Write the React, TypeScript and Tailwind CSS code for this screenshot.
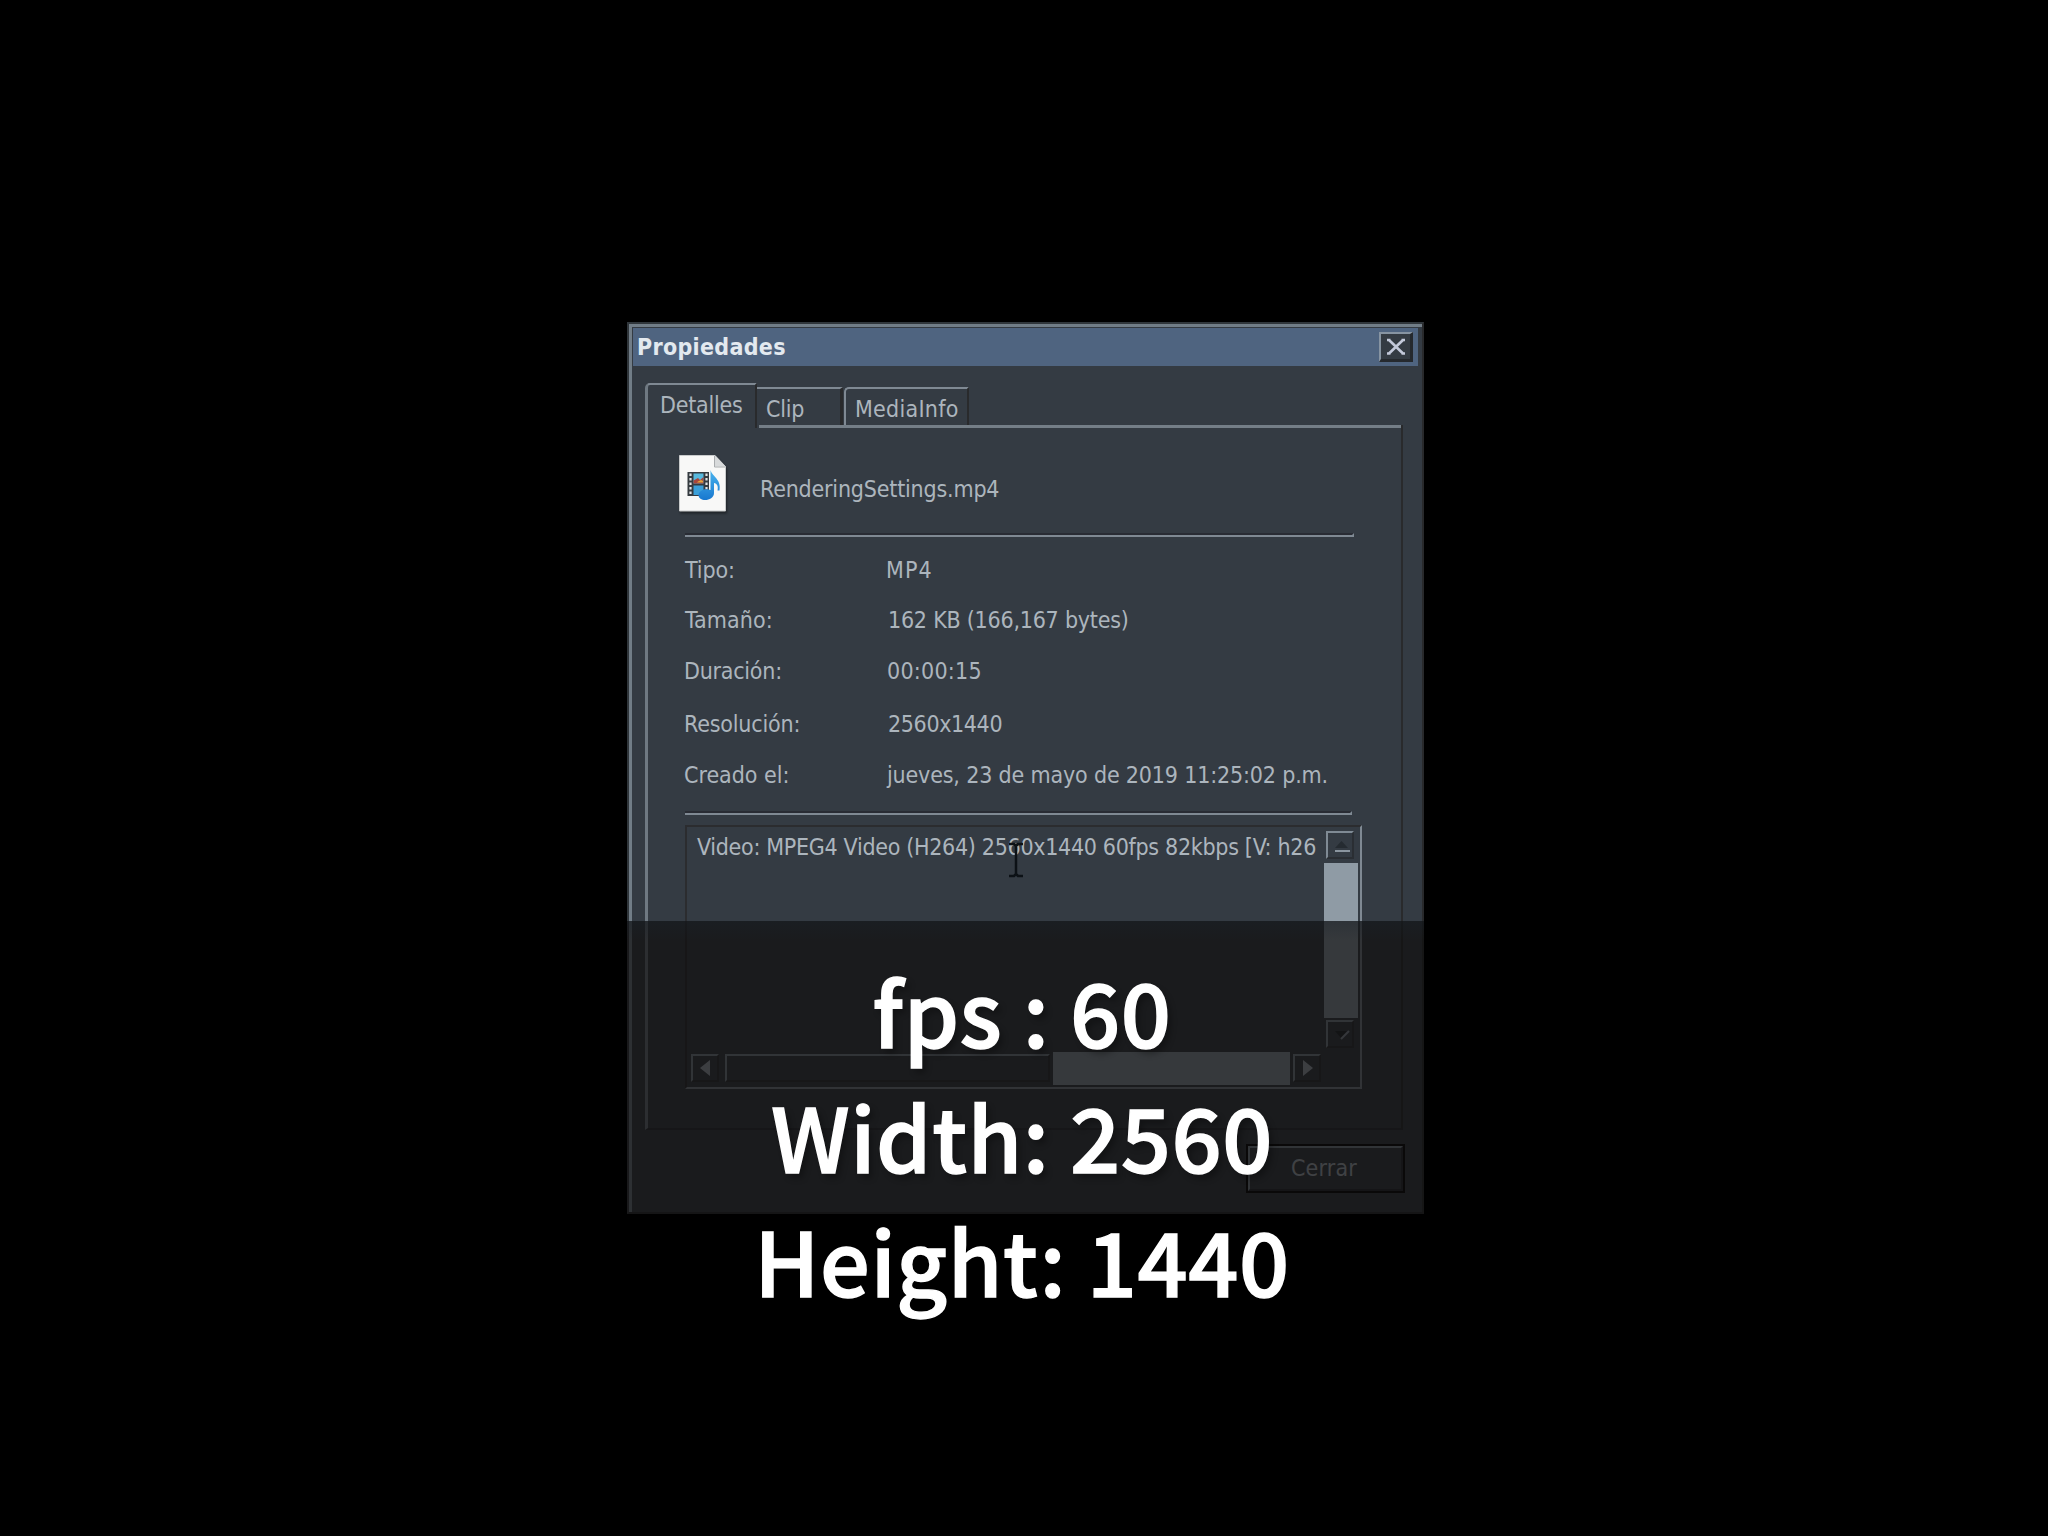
import type { ReactNode } from "react";

const rows = [
  { label: "Tipo:", value: "MP4", h: "h-[50px]", l: "pl-0 tracking-[-0.1px]", v: "pl-0 tracking-[1.1px]" },
  { label: "Tamaño:", value: "162 KB (166,167 bytes)", h: "h-[51px]", l: "pl-0 tracking-[0.1px]", v: "pl-0.5 tracking-[-0.23px]" },
  { label: "Duración:", value: "00:00:15", h: "h-[53px]", l: "-ml-px tracking-[-0.25px]", v: "pl-px tracking-[0.25px]" },
  { label: "Resolución:", value: "2560x1440", h: "h-[51px]", l: "-ml-px tracking-[-0.18px]", v: "pl-0.5 tracking-[-0.37px]" },
  { label: "Creado el:", value: "jueves, 23 de mayo de 2019 11:25:02 p.m.", h: "h-[49px]", l: "-ml-px tracking-[-0.03px]", v: "pl-px tracking-[-0.17px]" },
];

const captions = ["fps : 60", "Width: 2560", "Height: 1440"];

function Rule({ className }: { className: string }) {
  return <div className={`ml-[37px] h-1 shrink-0 border-t-2 border-r-2 border-b-2 border-t-[#292c34] border-r-[#7f8993] border-b-[#7f8993] ${className}`} />;
}

function ArrowButton({ className = "", children }: { className?: string; children: ReactNode }) {
  return (
    <div className={`flex h-7 w-7 shrink-0 items-center justify-center border-2 border-t-[#7f8a94] border-r-[#2a2e33] border-b-[#2a2e33] border-l-[#7f8a94] ${className}`}>
      {children}
    </div>
  );
}

function FileIcon() {
  return (
    <svg width="48" height="58" viewBox="0 0 48 58" className="shrink-0 drop-shadow-[1px_2px_1px_rgba(0,0,0,0.4)]">
      <defs>
        <linearGradient id="note" x1="0" y1="0" x2="0" y2="1">
          <stop offset="0" stopColor="#49b4ee" />
          <stop offset="1" stopColor="#1878cf" />
        </linearGradient>
      </defs>
      <path d="M0.5 0.5H36L46.5 11.5V56H0.5Z" fill="#f8f8f7" stroke="#c9cbcc" />
      <path d="M36 0.5V11.5H46.5Z" fill="#d8dadb" />
      <path d="M35.5 1V12H46" fill="none" stroke="#a9acae" strokeWidth="1" />
      <rect x="8.5" y="17" width="21.500" height="24" fill="#353b40" />
      <rect x="14.500" y="18.500" width="10" height="10" fill="#58b9dd" />
      <path d="M14.500 25.500L19 23L21 25L24.500 22V28.500H14.500Z" fill="#a8463c" />
      <path d="M19 26.500L22 25L24 26V27.500H18Z" fill="#e0a63b" />
      <rect x="14.500" y="30.500" width="10" height="9.500" fill="#3b9fd8" />
      <path d="M11.500 18.500V40M27.500 18.500V40" stroke="#dfe3e5" strokeWidth="2.200" strokeDasharray="2.500 2" />
      <path d="M31.500 15C33.500 22 42.500 24 40.500 35.500H38.500C39.500 31 38 28.500 35 28V38C35 46.500 19.500 47.500 19.500 40C20 34.500 27.500 33 31.500 35Z" fill="url(#note)" />
    </svg>
  );
}

export default function App() {
  return (
    <main className="h-[1536px] w-[2048px] overflow-hidden bg-black pt-[322px] pl-[627px] font-['DejaVu_Sans_Condensed','DejaVu_Sans',sans-serif] text-[23px] leading-[26px] whitespace-nowrap text-[#acb5bd]">
      <div className="relative h-[892px] w-[797px]">
        <section className="flex h-full w-full flex-col border-2 border-t-[#30363b] border-r-[#292a2c] border-b-[#24272a] border-l-[#30363b] bg-[#343b43]">
          <div className="flex h-full w-full flex-col border-t-3 border-l-3 border-t-[#717d87] border-l-[#717d87] pt-px pl-px">
            <header className="mr-1 flex h-[38px] shrink-0 items-start justify-between bg-[#4f6480] pt-1 pr-[5px] pl-1">
              <h1 className="mt-0.5 text-[23px] font-bold tracking-[0.3px] text-[#e3e9ef]">Propiedades</h1>
              <button className="flex h-[30px] w-[34px] items-center justify-center border-t-2 border-r-3 border-b-3 border-l-2 border-t-[#8794a2] border-r-[#25292e] border-b-[#25292e] border-l-[#8794a2] bg-[#343b43]">
                <svg width="20" height="18" viewBox="0 0 20 18" fill="none" stroke="#c3c9da" strokeWidth="2.600">
                  <path d="M3 2L17 15.500M17 2L3 15.500M1 2H4.500M15.500 2H19M1 15.500H4.500M15.500 15.500H19" />
                </svg>
              </button>
            </header>

            <nav className="mt-[17px] ml-3 flex h-[42px] shrink-0 items-start">
              <div className="h-[42px] w-[112px] rounded-tl-[5px] border-t-2 border-r-2 border-l-3 border-t-[#7f8993] border-r-[#292a2c] border-l-[#6f7982] pt-[7px] pl-3 tracking-[-0.25px]">Detalles</div>
              <div className="mt-1 h-[38px] w-[86px] border-t-2 border-r-3 border-t-[#7f8993] border-r-[#292a2c] pt-[7px] pl-[9px] tracking-[-0.2px]">Clip</div>
              <div className="mt-1 ml-px h-[38px] w-[125px] rounded-tl-[5px] border-t-2 border-r-2 border-l-2 border-t-[#7f8993] border-r-[#292a2c] border-l-[#7f8993] pt-[7px] pl-[9px] tracking-[0.25px]">MediaInfo</div>
            </nav>

            <div className="ml-3 flex h-[705px] w-[758px] shrink-0 flex-col border-r-2 border-b-2 border-l-3 border-r-[#292a2c] border-b-[#292c30] border-l-[#6f7982]">
              <div className="ml-[107px] h-[3px] shrink-0 border-l-2 border-l-[#292a2c]">
                <div className="ml-0.5 h-[3px] bg-[#747e87]" />
              </div>
              <div className="flex h-[105px] shrink-0 items-start pt-[27px] pl-[31px]">
                <FileIcon />
                <span className="mt-[21px] ml-[33px] tracking-[-0.2px]">RenderingSettings.mp4</span>
              </div>
              <Rule className="w-[669px]" />
              <dl className="mt-5 ml-[37px] flex h-[254px] shrink-0 flex-col">
                {rows.map((r) => (
                  <div key={r.label} className={`flex shrink-0 ${r.h}`}>
                    <dt className="w-[201px]">
                      <div className={r.l}>{r.label}</div>
                    </dt>
                    <dd className={r.v}>{r.value}</dd>
                  </div>
                ))}
              </dl>
              <Rule className="w-[667px]" />

              <div className="mt-2.5 ml-[37px] flex h-[264px] w-[677px] shrink-0 flex-col border-2 border-t-[#2b2c2f] border-r-[#7f8993] border-b-[#7f8993] border-l-[#2b2c2f]">
                <div className="flex h-[225px] shrink-0">
                  <div className="w-[637px] pt-[7px] pl-2.5 tracking-[-0.31px]">Video: MPEG4 Video (H264) 2560x1440 60fps 82kbps [V: h26</div>
                  <div className="flex w-[34px] flex-col pt-1">
                    <ArrowButton className="ml-0.5">
                      <svg width="18" height="18" viewBox="0 0 18 18" className="mt-1 ml-1 shrink-0">
                        <path d="M2 10L8.500 3L15 10Z" fill="#252b31" />
                        <path d="M2 13H17" stroke="#8a959f" strokeWidth="2" />
                      </svg>
                    </ArrowButton>
                    <div className="mt-1 h-[155px] w-[34px] shrink-0 bg-[#8f9ba5]" />
                    <ArrowButton className="mt-0.5 ml-0.5">
                      <svg width="18" height="18" viewBox="0 0 18 18" className="mt-1 ml-1 shrink-0">
                        <path d="M2 4H14L8 11Z" fill="#1f2428" />
                        <path d="M8 12L16 4" stroke="#8a959f" strokeWidth="2" />
                      </svg>
                    </ArrowButton>
                  </div>
                </div>
                <div className="flex h-[33px] items-start">
                  <ArrowButton className="mt-0.5 ml-1">
                    <svg width="10" height="16" viewBox="0 0 10 16" className="mr-px">
                      <path d="M10 0V16L0 8Z" fill="#a3acb6" />
                    </svg>
                  </ArrowButton>
                  <div className="mt-0.5 ml-1.5 h-7 w-[325px] shrink-0 border-2 border-t-[#7f8a94] border-r-[#2a2e33] border-b-[#2a2e33] border-l-[#7f8a94]" />
                  <div className="ml-[3px] h-[33px] w-[237px] shrink-0 bg-[#8f9ba5]" />
                  <ArrowButton className="mt-0.5 ml-[3px]">
                    <svg width="10" height="16" viewBox="0 0 10 16" className="ml-px">
                      <path d="M0 0V16L10 8Z" fill="#a3acb6" />
                    </svg>
                  </ArrowButton>
                </div>
              </div>
            </div>

            <footer className="mt-3.5 mr-[17px] flex justify-end">
              <div className="h-[49px] w-[159px] border-2 border-black">
                <div className="h-full w-full border-2 border-t-[#7f8a94] border-r-[#24282d] border-b-[#24282d] border-l-[#7f8a94] pt-[7px] pr-[3px] text-center tracking-[0.2px]">Cerrar</div>
              </div>
            </footer>
          </div>
        </section>

        <svg width="16" height="36" viewBox="0 0 16 36" fill="none" stroke="#0c1116" strokeWidth="2.500" className="absolute top-[520px] left-[381px]">
          <path d="M1 2H6L8 4L10 2H15M8 4V32M1 34H6L8 32L10 34H15" />
        </svg>

        <div className="absolute inset-x-0 top-[599px] bottom-0 bg-[rgba(14,13,13,0.69)]">
          <div className="h-5 bg-linear-to-b from-[rgba(26,36,46,0.3)] to-transparent" />
        </div>

        <div className="absolute top-[626px] left-[95px] w-[600px] text-center font-['Noto_Sans_CJK_SC',sans-serif] text-[88px] leading-[124.5px] font-medium tracking-[0.6px] text-white [-webkit-text-stroke:1.4px_white] [text-shadow:4px_5px_6px_rgba(0,0,0,0.3)]">
          {captions.map((c) => (
            <div key={c}>{c}</div>
          ))}
        </div>
      </div>
    </main>
  );
}
